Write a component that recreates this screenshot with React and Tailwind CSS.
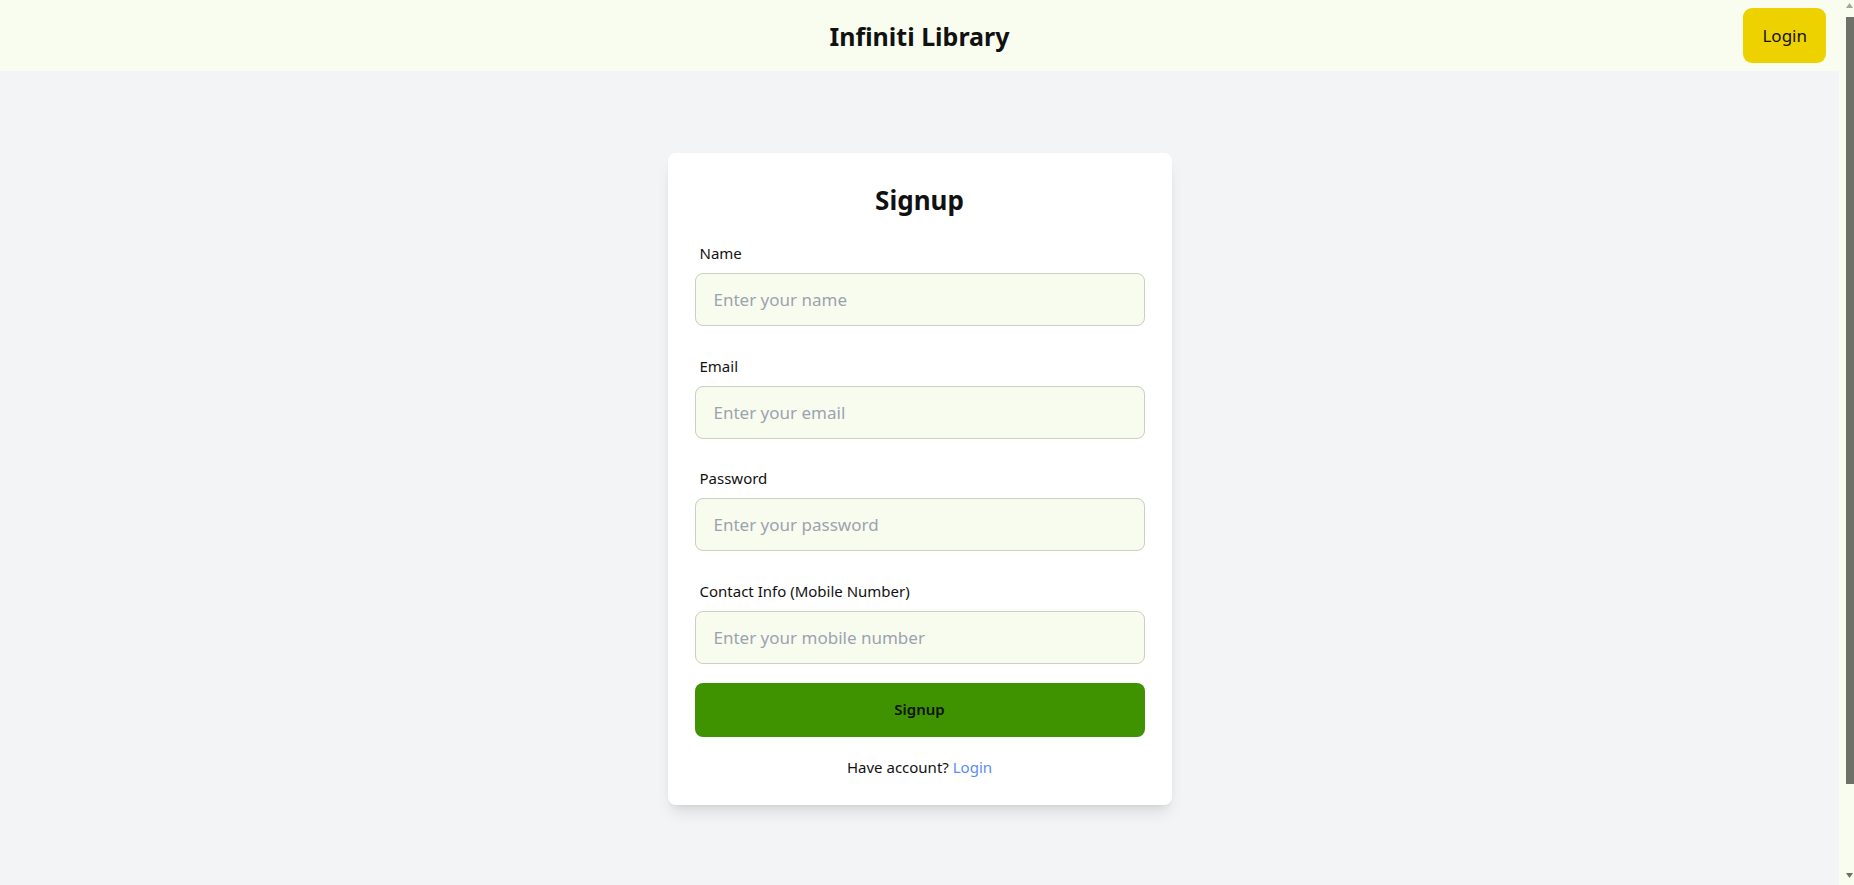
import React from "react";

const font = { fontFamily: '"Noto Sans", "Open Sans", sans-serif' };

function Field({ label, placeholder, type = "text", last = false }) {
  return (
    <div className={last ? "mb-[19px]" : "mb-[29.5px]"}>
      <label className="block ml-[5px] mb-[10px] text-[15px] leading-5 text-[#111111]">
        {label}
      </label>
      <input
        type={type}
        placeholder={placeholder}
        className="block w-full h-[53px] rounded-lg border border-[#cdcfc3] bg-[#f8fcef] px-[18px] text-[17px] text-[#1a1a1a] placeholder:text-[#9ca3af] outline-none"
      />
    </div>
  );
}

function Scrollbar() {
  return (
    <aside className="w-[15px] shrink-0 h-screen flex flex-col items-end bg-[#f8fdef]">
      <div className="h-[17px] w-full flex items-start justify-end pt-[3px] pr-[1px]">
        <svg width="7" height="5" viewBox="0 0 7 5">
          <path d="M0 5 L3.5 0 L7 5 Z" fill="#a3a59e" />
        </svg>
      </div>
      <div className="h-[767px] w-[8px] bg-[#6e7168]" />
      <div className="flex-1" />
      <div className="h-[12px] w-full flex items-start justify-end pr-[1px]">
        <svg width="7" height="5" viewBox="0 0 7 5">
          <path d="M0 0 L7 0 L3.5 5 Z" fill="#6e7168" />
        </svg>
      </div>
    </aside>
  );
}

export default function App() {
  return (
    <div style={font} className="flex h-screen overflow-hidden bg-[#f3f4f6]">
      <div className="flex-1 min-w-0 h-screen overflow-hidden">
        <header className="grid grid-cols-[1fr_auto_1fr] items-center h-[71px] bg-[#f8fdef]">
          <div />
          <h1 className="text-[25px] font-bold leading-8 text-[#111111]">Infiniti Library</h1>
          <div className="flex justify-end pr-[13px]">
            <button className="h-[55px] px-[19px] rounded-[9px] bg-[#eed200] text-[17px] text-[#111111]">
              Login
            </button>
          </div>
        </header>
        <main className="pt-[82px] pb-[178px]">
          <div className="mx-auto w-[504px] rounded-lg bg-white px-[27px] pt-[27px] pb-[28px] shadow-lg">
            <h2 className="text-center text-[26px] font-bold leading-[40px] mb-[23px] text-[#111111]">
              Signup
            </h2>
            <Field label="Name" placeholder="Enter your name" />
            <Field label="Email" placeholder="Enter your email" type="email" />
            <Field label="Password" placeholder="Enter your password" type="password" />
            <Field label="Contact Info (Mobile Number)" placeholder="Enter your mobile number" last />
            <button className="block w-full h-[54px] rounded-lg bg-[#409300] text-[15px] font-semibold text-[#111111]">
              Signup
            </button>
            <p className="mt-[20px] text-center text-[15px] leading-5 text-[#111111]">
              Have account? <a className="text-[#5a8df6] cursor-pointer">Login</a>
            </p>
          </div>
        </main>
      </div>
      <Scrollbar />
    </div>
  );
}
